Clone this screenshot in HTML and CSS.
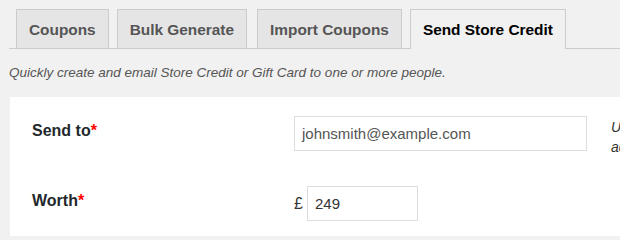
FILE: index.html
```html
<!DOCTYPE html>
<html>
<head>
<meta charset="utf-8">
<link rel="stylesheet" href="styles.css">
</head>
<body>
<div class="wrap">
  <nav class="tabs">
    <a class="tab">Coupons</a>
    <a class="tab">Bulk Generate</a>
    <a class="tab tab-gap">Import Coupons</a>
    <a class="tab active">Send Store Credit</a>
  </nav>
  <p class="intro">Quickly create and email Store Credit or Gift Card to one or more people.</p>
  <div class="panel">
    <div class="row">
      <div class="label">Send to<span class="req">*</span></div>
      <div class="field">
        <div class="input email">johnsmith@example.com</div>
        <div class="help">Use comma to separate multiple email addresses</div>
      </div>
    </div>
    <div class="row">
      <div class="label">Worth<span class="req">*</span></div>
      <div class="field">
        <span class="cur">£</span>
        <div class="input amount">249</div>
      </div>
    </div>
  </div>
</div>
</body>
</html>
```
FILE: styles.css
```css
html, body {
  margin: 0;
  padding: 0;
  background: #f1f1f1;
  font-family: "Liberation Sans", Arial, sans-serif;
  overflow: hidden;
}
body {
  height: 236px;
}
.wrap {
  padding-left: 9px;
  width: 800px;
}
.tabs {
  display: flex;
  padding-left: 7px;
  padding-top: 9px;
  border-bottom: 1px solid #cccccc;
  height: 39px;
}
.tab {
  display: block;
  flex-shrink: 0;
  box-sizing: border-box;
  height: 39px;
  padding: 0 12px;
  margin-right: 8px;
  border: 1px solid #cccccc;
  border-bottom: none;
  background: #e5e5e5;
  color: #555555;
  font-weight: bold;
  font-size: 15.4px;
  line-height: 39px;
}
.tab-gap { margin-left: 2px; }
.tab.active {
  background: #f1f1f1;
  color: #000000;
  height: 40px;
  margin-bottom: -1px;
}
.intro {
  margin: 0;
  padding-top: 14px;
  height: 34px;
  font-style: italic;
  font-size: 13.5px;
  line-height: 20px;
  color: #555555;
}
.panel {
  margin-left: 1px;
  background: #ffffff;
  padding: 19px 0 16px 22px;
}
.row {
  display: flex;
  align-items: flex-start;
  height: 70px;
}
.label {
  flex-shrink: 0;
  width: 262px;
  padding-top: 5px;
  font-weight: bold;
  font-size: 16px;
  line-height: 20px;
  color: #23282d;
}
.req { color: #ff0000; }
.field {
  display: flex;
  align-items: flex-start;
  flex-shrink: 0;
}
.input {
  flex-shrink: 0;
  box-sizing: border-box;
  height: 35px;
  border: 1px solid #dddddd;
  padding: 0 7px;
  font-size: 15px;
  line-height: 33px;
  color: #333333;
}
.email {
  width: 293px;
  color: #555555;
}
.help {
  flex-shrink: 0;
  margin-left: 24px;
  width: 240px;
  padding-top: 1px;
  font-style: italic;
  font-size: 14px;
  line-height: 20px;
  color: #333333;
}
.cur {
  width: 13px;
  font-size: 16px;
  line-height: 35px;
  color: #333333;
}
.amount { width: 111px; }
```
